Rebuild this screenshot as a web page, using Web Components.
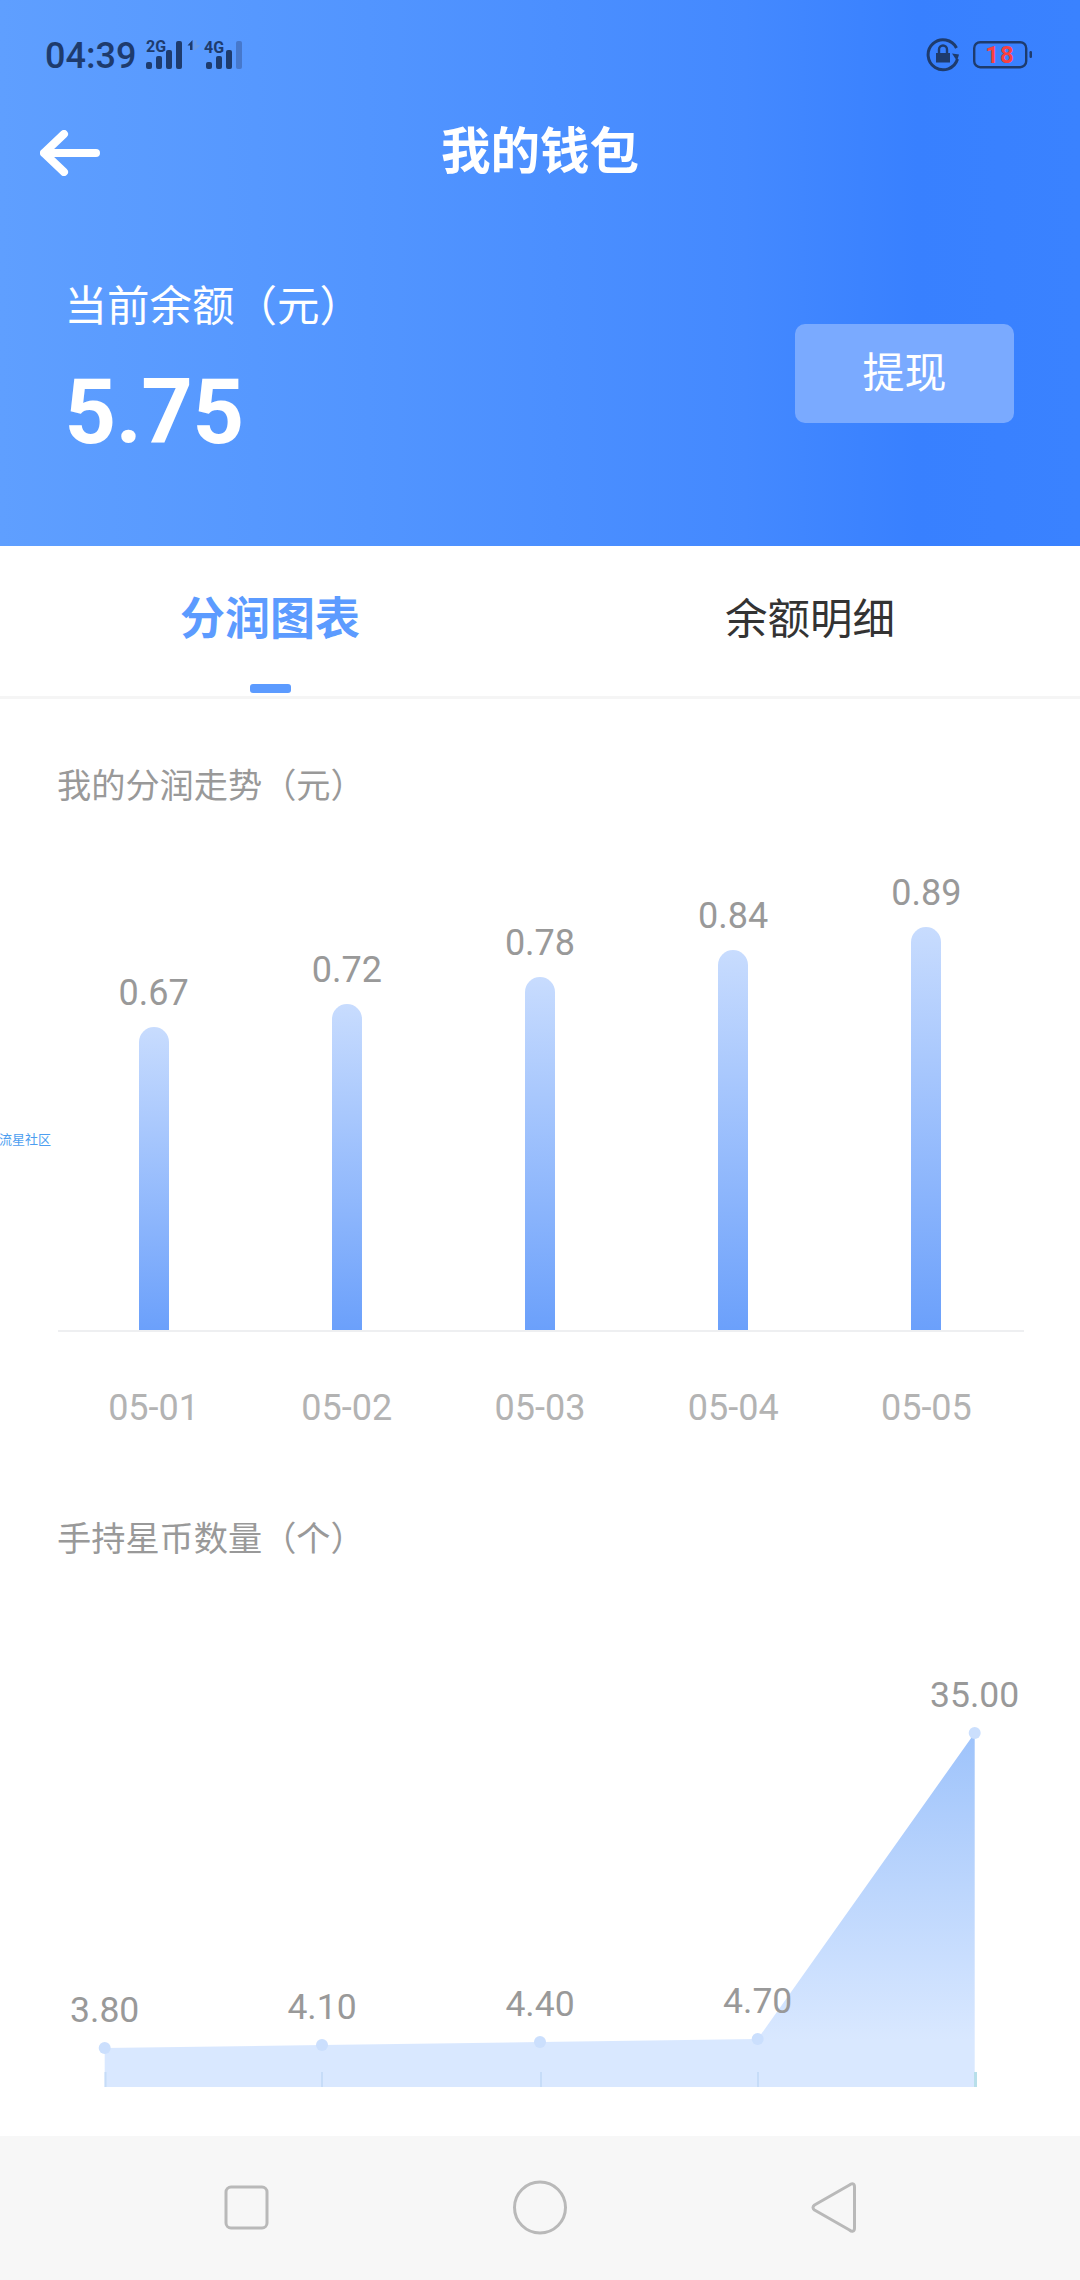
<!DOCTYPE html>
<html lang="zh">
<head>
<meta charset="utf-8">
<title>我的钱包</title>
<style>
html,body{margin:0;padding:0}
body{width:1080px;height:2280px;overflow:hidden;background:#fff;display:flex;flex-direction:column;font-family:Roboto,"Noto Sans CJK SC",sans-serif}
</style>
</head>
<body>
<wallet-header></wallet-header>
<tab-bar></tab-bar>
<chart-page>
  <section-title style="margin-top:64px">我的分润走势（元）</section-title>
  <bar-chart data="05-01:0.67:303,05-02:0.72:326,05-03:0.78:353,05-04:0.84:380,05-05:0.89:403"></bar-chart>
  <section-title style="margin-top:88px">手持星币数量（个）</section-title>
  <line-chart></line-chart>
</chart-page>
<nav-bar></nav-bar>
<script>
const CJK='Roboto,"Noto Sans CJK SC",sans-serif';
function def(name,html){
  customElements.define(name,class extends HTMLElement{
    connectedCallback(){
      if(this.shadowRoot)return;
      const r=this.attachShadow({mode:'open'});
      r.innerHTML=typeof html==='function'?html(this):html;
    }
  });
}
def('status-bar',`<style>
:host{display:flex;align-items:center;height:110px;padding:0 48px 0 45px;box-sizing:border-box;color:#1e3b6d;justify-content:space-between}
.left,.right{display:flex;align-items:center}
.time{font:500 36px/1 ${CJK};margin-top:2px}
svg{display:block}
.batt{position:relative;width:59px;height:28px;margin-left:12px}
.batt span{position:absolute;left:0;top:0;width:54px;height:27px;text-align:center;font:700 24px/28px ${CJK};letter-spacing:1px;color:#f94040}
</style>
<div class="left"><span class="time">04:39</span>
<svg width="100" height="36" viewBox="145 37 100 36" style="margin-left:9px">
<text x="146" y="52" font-family="Roboto" font-weight="700" font-size="16" fill="#1e3b6d">2G</text>
<g fill="#1e3b6d"><rect x="146" y="62" width="6" height="7" rx="2"/><rect x="156" y="56" width="6" height="13" rx="2"/><rect x="166" y="50" width="6" height="19" rx="2"/><rect x="176" y="41" width="6" height="28" rx="2"/></g>
<path d="M187.500 45.500L192.500 40V50H190V45.500z" fill="#1e3b6d"/>
<path d="M194 40H196.500V45H201L194 51z" fill="#6a9be6"/>
<text x="204" y="53" font-family="Roboto" font-weight="700" font-size="16" fill="#1e3b6d">4G</text>
<g fill="#1e3b6d"><rect x="206" y="62" width="6" height="7" rx="2"/><rect x="216" y="56" width="6" height="13" rx="2"/><rect x="226" y="50" width="6" height="19" rx="2"/></g>
<rect x="236" y="41" width="6" height="28" rx="2" fill="#4678cc"/>
</svg></div>
<div class="right">
<svg width="36" height="36" viewBox="925 37 36 36">
<path d="M957.500 59A15 15 0 1 1 956.500 48" fill="none" stroke="#1e3b6d" stroke-width="3"/>
<path d="M952 53.500l7 1-2 6.500z" fill="#1e3b6d"/>
<rect x="936" y="53" width="14" height="9.500" fill="#1e3b6d"/>
<path d="M939 53v-3.500a4 4 0 0 1 8 0v3.500" fill="none" stroke="#1e3b6d" stroke-width="2.400"/>
</svg>
<div class="batt"><svg width="59" height="28" viewBox="973 41 59 28">
<rect x="974.200" y="42.200" width="52" height="25" rx="6" fill="none" stroke="#1e3b6d" stroke-width="2.400"/>
<rect x="1029.500" y="51" width="2.500" height="7" rx="1.200" fill="#1e3b6d"/></svg><span>18</span></div>
</div>`);
def('wallet-header',`<style>
:host{display:block;height:546px;flex:none;color:#fff;background:linear-gradient(90deg,#5f9fff 0%,#5295ff 34%,#4489ff 69%,#3880ff 85%,#3a82ff 100%)}
.nav{display:grid;grid-template-columns:1fr auto 1fr;align-items:center;height:80px;padding-left:40px}
.nav svg{display:block;margin-top:6px}
h1{margin:0;font:700 49.500px/80px ${CJK};transform:translate(-20px,1.500px)}
.bal{display:flex;justify-content:space-between;align-items:flex-start;padding:92px 66px 0 64.500px}
.lab{font:400 42.500px/50px ${CJK};white-space:nowrap}
.amt{font:700 90px/100px ${CJK};margin-top:31px;letter-spacing:-.5px}
.btn{width:219px;height:99px;border-radius:10px;background:#7aaaff;display:flex;align-items:center;justify-content:center;font:400 42px/1 ${CJK};margin-top:42px}
</style>
<status-bar></status-bar>
<div class="nav"><svg width="60" height="46" viewBox="0 0 60 46"><path d="M24 4L4 23l20 19M4 23h52" fill="none" stroke="#fff" stroke-width="8" stroke-linecap="round" stroke-linejoin="round"/></svg><h1>我的钱包</h1><span></span></div>
<div class="bal"><div><div class="lab">当前余额（元）</div><div class="amt">5.75</div></div><div class="btn">提现</div></div>`);
def('tab-bar',`<style>
:host{display:grid;grid-template-columns:1fr 1fr;height:153px;flex:none;box-sizing:border-box;border-bottom:3px solid #f5f5f5;background:#fff}
div{display:flex;flex-direction:column;align-items:center;position:relative}
span{font:400 42.500px/60px ${CJK};color:#333;margin-top:43.500px}
.a span{font:700 45px/60px ${CJK};color:#5c9bff}
i{position:absolute;bottom:3px;left:250px;width:41px;height:9px;border-radius:3px;background:#5c9bff}
</style><div class="a"><span>分润图表</span><i></i></div><div><span>余额明细</span></div>`);
def('chart-page',`<style>
:host{display:block;flex:1;position:relative;overflow:hidden}
.wm{position:absolute;left:-1px;top:433px;font:400 13px/16px ${CJK};color:#4d9ef0}
</style><slot></slot><span class="wm">流星社区</span>`);
def('section-title',`<style>:host{display:block;padding-left:57px;font:400 34.200px/46px ${CJK};color:#999;white-space:nowrap}</style><slot></slot>`);
def('bar-chart',el=>{
  const d=el.getAttribute('data').split(',').map(s=>s.split(':'));
  return `<style>
:host{display:block;padding:0 56px 0 58px}
.plot{display:grid;grid-template-columns:repeat(5,1fr);height:521px;border-bottom:2px solid #eeeff1;align-items:end}
.col{display:flex;flex-direction:column;align-items:center;transform:translateX(-1px)}
.v{font:400 36px/40px ${CJK};color:#999;margin-bottom:14px}
.b{width:30px;border-radius:15px 15px 0 0;background:linear-gradient(#c8dcfe,#6ba0fb)}
.x{display:grid;grid-template-columns:repeat(5,1fr);margin-top:56px;font:400 36px/40px ${CJK};color:#b3b3b3;text-align:center;transform:translateX(-1px)}
</style><div class="plot">${d.map(r=>`<div class="col"><span class="v">${r[1]}</span><div class="b" style="height:${r[2]}px"></div></div>`).join('')}</div>
<div class="x">${d.map(r=>`<span>${r[0]}</span>`).join('')}</div>`;
});
def('line-chart',()=>{
  const pts=[[104.700,2048,'3.80',2010],[322,2045,'4.10',2007],[540,2042,'4.40',2004],[757.700,2039,'4.70',2001],[974.700,1733,'35.00',1695]];
  return `<style>:host{display:block;height:574px}svg{display:block}
text{font:400 35.500px ${CJK};fill:#999;text-anchor:middle;dominant-baseline:central}</style>
<svg width="1080" height="574" viewBox="0 1562 1080 574">
<defs><linearGradient id="g" gradientUnits="userSpaceOnUse" x1="0" y1="1733" x2="0" y2="2040"><stop offset="0" stop-color="#9ec3fb"/><stop offset="1" stop-color="#d9e8ff"/></linearGradient></defs>
<polygon points="${pts.map(p=>p[0]+','+p[1]).join(' ')} 974.700,2087 104.700,2087" fill="url(#g)"/>
<path d="M105.500 2072V2087M322 2072V2087M541 2072V2087M758 2072V2087" stroke="#c6dcf8" stroke-width="2" fill="none"/>
<path d="M975.500 2072V2087" stroke="#b8dfea" stroke-width="3" fill="none"/>
${pts.map(p=>`<circle cx="${p[0]}" cy="${p[1]}" r="6" fill="#cbdffd"/><text x="${p[0]}" y="${p[3]}">${p[2]}</text>`).join('')}
</svg>`;
});
def('nav-bar',`<style>:host{display:block;height:144px;flex:none;background:#f7f7f7}svg{display:block}</style>
<svg width="1080" height="144" viewBox="0 2136 1080 144" fill="none" stroke="#b9b9b9" stroke-width="3">
<rect x="226" y="2187" width="41" height="41" rx="5"/>
<circle cx="540" cy="2207.500" r="25.500"/>
<path d="M854.500 2187c0-3.500-2.500-4-5-2l-35 20c-2 1.500-2 3.500 0 5l35 20c2.500 2 5 1.500 5-2z" stroke-linejoin="round"/>
</svg>`);
</script>
</body>
</html>
